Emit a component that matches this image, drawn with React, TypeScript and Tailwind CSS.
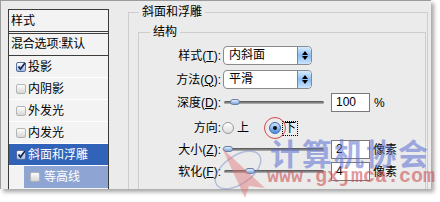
import React from "react";

const font = { fontFamily: '"Liberation Sans", "Noto Sans CJK SC", sans-serif' };

type Row = { label: string; checked?: boolean; state?: "sel" | "sub" };

const rows: Row[] = [
	{ label: "投影", checked: true },
	{ label: "内阴影" },
	{ label: "外发光" },
	{ label: "内发光" },
	{ label: "斜面和浮雕", checked: true, state: "sel" },
];

const Check = ({ checked }: { checked?: boolean }) => (
	<span
		className={
			checked
				? "relative flex h-[10px] w-[10px] items-center justify-center rounded-[2px] border border-[#5a6f9a] bg-gradient-to-b from-[#ffffff] to-[#9fb8e6]"
				: "h-[10px] w-[10px] rounded-[2px] border border-[#b4b4b4] bg-gradient-to-b from-[#fdfdfd] to-[#d6d6d6]"
		}
	>
		{checked && (
			<svg width="9" height="9" viewBox="0 0 9 9" className="absolute -top-[1px] left-0">
				<path d="M1.5 4.5 L3.5 7 L8 1" stroke="#1b2a55" strokeWidth="1.8" fill="none" />
			</svg>
		)}
	</span>
);

const Label = ({ text, mn }: { text: string; mn?: string }) => (
	<span className="w-[82px] shrink-0 text-right text-[12px] text-black">
		{text}
		{mn ? (
			<>
				(<span className="underline">{mn}</span>):
			</>
		) : (
			":"
		)}
	</span>
);

const Select = ({ value }: { value: string }) => (
	<div className="ml-[2px] flex h-[19px] w-[89px] items-stretch overflow-hidden rounded-[4px] border border-[#8a8a8a] bg-white">
		<span className="flex-1 pl-[5px] text-[12px] leading-[17px]">{value}</span>
		<span className="flex w-[14px] flex-col items-center justify-center gap-[1px] rounded-r-[3px] border-l border-[#6d86b8] bg-gradient-to-b from-[#d9ecff] via-[#8cbdf2] to-[#c8e4ff]">
			<span className="h-0 w-0 border-x-[3px] border-b-[4px] border-x-transparent border-b-black" />
			<span className="h-0 w-0 border-x-[3px] border-t-[4px] border-x-transparent border-t-black" />
		</span>
	</div>
);

const Slider = ({ knob }: { knob: number }) => (
	<div className="relative ml-[3px] h-full w-[103px]">
		<div className="absolute left-0 top-[8px] h-[3px] w-[100px] rounded-full bg-gradient-to-b from-[#4e4e4e] to-[#b8b8b8]" />
		<div
			className="absolute top-[6px] h-[6px] w-[10px] rounded-full border border-[#6b7fa6] bg-gradient-to-b from-[#e4f0ff] to-[#7fa6dc]"
			style={{ left: knob - 5 }}
		/>
	</div>
);

const NumBox = ({ value }: { value: string }) => (
	<span className="ml-[4px] h-[19px] w-[39px] border border-[#7a7a7a] bg-white pl-[4px] text-[12px] leading-[17px]">
		{value}
	</span>
);

const Radio = ({ on }: { on?: boolean }) => (
	<span
		className={
			on
				? "flex h-[12px] w-[12px] items-center justify-center rounded-full border border-[#3d6aa8] bg-gradient-to-b from-[#cfe6ff] to-[#4d8fe0]"
				: "h-[12px] w-[12px] rounded-full border border-[#9a9a9a] bg-gradient-to-b from-[#ffffff] to-[#dcdcdc]"
		}
	>
		{on && <span className="h-[4px] w-[4px] rounded-full bg-[#111]" />}
	</span>
);

export default function App() {
	return (
		<div className="relative h-[202px] w-[440px] overflow-hidden bg-white" style={font}>
			<div className="flex h-[189px] w-[431px] overflow-hidden border-l border-t border-[#9c9c9c] bg-[#ebebeb] shadow-[3px_3px_4px_rgba(0,0,0,0.35)]">
				{/* style list */}
				<div className="ml-[7px] mt-[8px] h-[190px] w-[101px] shrink-0 border border-[#3c3c3c] bg-[#f3f3f3]">
					<div className="h-[22px] border-b border-[#3c3c3c] pl-[2px] text-[12px] leading-[22px]">样式</div>
					<div className="h-[1px]" />
					<div className="h-[23px] border-y border-[#3c3c3c] pl-[2px] text-[12px] leading-[21px] tracking-[-0.2px]">
						混合选项:默认
					</div>
					{rows.map((r) => (
						<div
							key={r.label}
							className={
								r.state === "sel"
									? "flex h-[22px] items-center gap-[2px] border-b border-white bg-[#3163b8] pl-[7px] text-[12px] text-white"
									: "flex h-[22px] items-center gap-[2px] border-b border-white pl-[7px] text-[12px] text-black"
							}
						>
							<Check checked={r.checked} />
							<span>{r.label}</span>
						</div>
					))}
					<div className="flex h-[22px]">
						<div className="w-[15px]" />
						<div className="flex flex-1 items-center gap-[4px] bg-[#8ea5d3] pl-[6px] text-[12px] text-white">
							<Check />
							<span>等高线</span>
						</div>
					</div>
				</div>

				{/* bevel and emboss */}
				<fieldset className="ml-[19px] mt-[3px] h-[200px] w-[300px] shrink-0 border border-[#cdcdcd]">
					<legend className="ml-[10px] px-[3px] text-[12px] leading-[16px]">斜面和浮雕</legend>
					<fieldset className="ml-[9px] mr-[1px] mt-[4px] h-[170px] border border-[#cdcdcd]">
						<legend className="ml-[11px] px-[3px] text-[12px] leading-[16px]">结构</legend>
						<div className="flex flex-col">
							<div className="mt-[6px] flex h-[19px] items-center">
								<Label text="样式" mn="T" />
								<Select value="内斜面" />
							</div>
							<div className="mt-[5px] flex h-[19px] items-center">
								<Label text="方法" mn="Q" />
								<Select value="平滑" />
							</div>
							<div className="mt-[4px] flex h-[19px] items-center">
								<Label text="深度" mn="D" />
								<Slider knob={11} />
								<NumBox value="100" />
								<span className="ml-[4px] text-[12px]">%</span>
							</div>
							<div className="mt-[5px] flex h-[22px] items-center">
								<Label text="方向" />
								<span className="ml-[1px] flex items-center gap-[3px] text-[12px]">
									<Radio />
									<span>上</span>
								</span>
								<span className="relative ml-[20px] flex items-center gap-[1px] text-[12px]">
									<span className="absolute -left-[5px] h-[22px] w-[22px] rounded-full border border-[#d9474f]" />
									<Radio on />
									<span className="border border-dotted border-black px-[1px] leading-[13px]">下</span>
								</span>
							</div>
							<div className="mt-[1px] flex h-[19px] items-center">
								<Label text="大小" mn="Z" />
								<Slider knob={4} />
								<NumBox value="2" />
								<span className="ml-[3px] text-[12px]">像素</span>
							</div>
							<div className="mt-[3px] flex h-[19px] items-center">
								<Label text="软化" mn="F" />
								<Slider knob={26} />
								<NumBox value="4" />
								<span className="ml-[3px] text-[12px]">像素</span>
							</div>
						</div>
					</fieldset>
				</fieldset>
			</div>

			{/* watermark over the dialog */}
			<svg className="pointer-events-none absolute left-[205px] top-[140px]" width="70" height="60" viewBox="0 0 70 60">
				<ellipse cx="33" cy="30" rx="26" ry="14" transform="rotate(-35 33 30)" fill="none" stroke="#6f86c8" strokeOpacity="0.45" strokeWidth="1.5" />
				<polygon points="17,8 60,48 44,46 40,58" fill="#e07070" fillOpacity="0.45" />
			</svg>
			<div
				className="pointer-events-none absolute left-[270px] top-[135px] whitespace-nowrap text-[30px] font-bold leading-[34px] tracking-[2px] text-[#5a6fd0] opacity-55"
				style={{ fontFamily: '"Noto Sans CJK SC", sans-serif' }}
			>
				计算机协会
			</div>
			<div
				className="pointer-events-none absolute left-[267px] top-[166px] whitespace-nowrap text-[20px] font-bold leading-[22px] text-[#c84848] opacity-55"
				style={{ fontFamily: '"Liberation Mono", monospace' }}
			>
				www.gxjmca.com
			</div>
		</div>
	);
}
